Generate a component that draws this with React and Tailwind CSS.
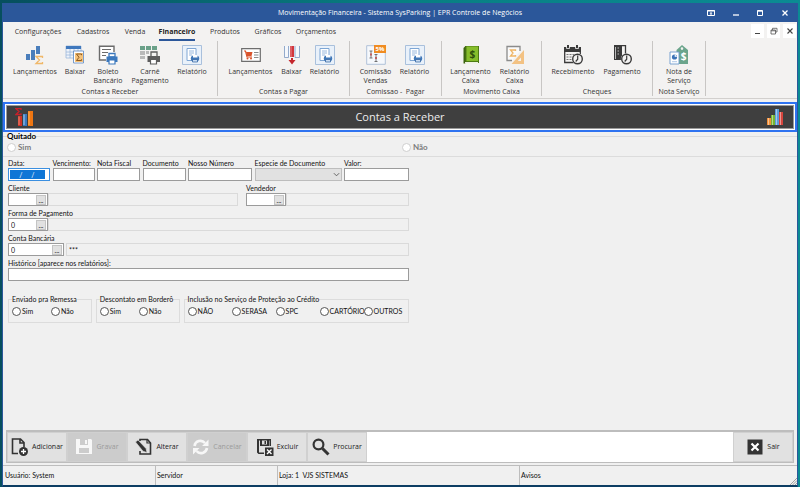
import clsx from "clsx"

const uiFont = "font-['Open_Sans','Noto_Sans',sans-serif]"
const formFont = "font-['Lato','Noto_Sans',sans-serif]"

/* ---------- ribbon icons (20x20) ---------- */

const Svg = ({ children, className = "size-5", box = "0 0 20 20" }) => (
  <svg viewBox={box} className={clsx("shrink-0", className)} fill="none" aria-hidden="true">
    {children}
  </svg>
)

const BarsSigmaIcon = () => (
  <Svg>
    <path fill="#4a7ebb" d="M1 9h4v6H1zM6 5h4v10H6zM11 1h4v8h-4z" />
    <path stroke="#f0b869" strokeWidth="1.3" d="M17.5 13v-1.5H11l3.5 3.5-3.5 3.5h6.5V17" />
  </Svg>
)

const TableSigmaIcon = () => (
  <Svg>
    <path fill="#eef3fa" stroke="#9db8da" strokeWidth=".8" d="M1 1h15v12H1z" />
    <path fill="#3f78bd" d="M1 1h15v3H1z" />
    <path stroke="#9db8da" strokeWidth=".8" d="M1 7h15M1 10h15M5 4v9M9 4v9M13 4v9" />
    <path fill="#fff" stroke="#5b87c0" strokeWidth=".8" d="M8.5 6h10v12h-10z" />
    <path fill="#f6c27a" d="M10 8h8v9h-8z" />
    <path stroke="#8a5a20" d="M16.5 10.2V9h-5l2.5 3.3-2.5 3.2h5v-1.2" />
  </Svg>
)

const DocPrinterIcon = () => (
  <Svg>
    <path fill="#fff" stroke="#6b6b6b" strokeWidth="1.4" d="M8 15H1.5V1.2H16V7" />
    <path stroke="#6b6b6b" strokeWidth="1.2" d="M4 4.5h9M4 7.5h6M4 10.5h4" />
    <path fill="#fff" stroke="#3b78bd" strokeWidth="1.3" d="M11 8.500h6V12h-6z" />
    <path fill="#3b78bd" d="M8.5 11.500h11V17h-11z" />
    <path fill="#fff" stroke="#3b78bd" strokeWidth="1.2" d="M11 15h6v4h-6z" />
  </Svg>
)

const GridPrinterIcon = () => (
  <Svg>
    <path fill="#6aa088" d="M0 1h5v4H0zM6 1h5v4H6zM12 1h5v4h-5z" />
    <path fill="#b9b9b9" d="M0 6h5v4H0zM0 11h5v3H0zM6 6h3v3H6z" />
    <path stroke="#5d5d5d" strokeWidth="1.3" d="M11 11V7h6v4" />
    <path fill="#5d5d5d" d="M7.5 11H20v6H7.500z" />
    <path fill="#fff" stroke="#5d5d5d" strokeWidth="1.2" d="M10.500 14.500h6V19h-6z" />
  </Svg>
)

const ReportIcon = () => (
  <Svg>
    <path fill="#e9f1fa" stroke="#a9c0dc" d="M.5.5h19v19H.5z" />
    <path fill="#fff" stroke="#7ea6d4" d="M5 3.500h9v12H5z" />
    <path stroke="#7ea6d4" strokeWidth=".8" d="M7 6h5M7 8h5M7 10h3" />
    <ellipse cx="13" cy="13.500" rx="4.200" ry="3.300" fill="#4178b8" />
    <path fill="#fff" d="M11 10h4.500v2.500H11z" />
    <path fill="#c9dcf2" stroke="#2d5f9c" strokeWidth=".7" d="M10.500 14.500h5V17h-5z" />
  </Svg>
)

const CartCardIcon = () => (
  <Svg>
    <path fill="#fff" stroke="#6e6e6e" strokeWidth="1.2" d="M.7 3.700h18.600v12.600H.7z" />
    <path stroke="#d9532c" strokeWidth="1.2" d="M3 6h1.500l1.500 6h5" />
    <path fill="#d9532c" d="M5 7h6.500l-1 4H6z" />
    <circle cx="6.500" cy="13.500" r="1" fill="#d9532c" />
    <circle cx="10" cy="13.500" r="1" fill="#d9532c" />
    <path stroke="#8a8a8a" d="M13 7.500h4.500M13 10h4.500M13 12.500h4.500" />
  </Svg>
)

const ColumnDownIcon = () => (
  <Svg>
    <path fill="#f4f7fb" d="M2 1h15v11H2z" />
    <path stroke="#7896c0" strokeWidth=".8" d="M2.500 1v11.500h4V1M13 1v11.500h4.500V1" />
    <path fill="#d2363c" d="M8 1h4v11H8z" />
    <path fill="#e8888b" d="M8.500 1h1v11h-1z" />
    <path fill="#c4272d" d="M9 13h2v2h2.500L10 19.500 6.500 15H9z" />
  </Svg>
)

const CommissionIcon = () => (
  <Svg>
    <path fill="#f5f8fc" stroke="#a9bcd6" strokeWidth=".9" d="M.7.7h18.600v18.600H.7z" />
    <path fill="#f08c22" d="M8 0h12v8H8z" />
    <text x="14" y="6" textAnchor="middle" fontSize="6" fontWeight="700" fill="#fff">
      5%
    </text>
    <path stroke="#555" strokeWidth=".8" d="M3.500 6h3M3.500 13h3M5 6v7M8.500 9.500h3M8.500 16.500h3M10 9.500v7" />
    <path fill="#c2474a" d="M4.200 8.500h1.600v2H4.200zM9.200 12h1.600v2H9.200z" />
  </Svg>
)

const CashBookIcon = () => (
  <Svg>
    <path fill="#4d7a14" d="M4 1h14v17H4z" />
    <path fill="#3c6310" d="M2.500 3l2-2v17.500h-2z" />
    <path fill="#86bd2b" d="M5.500 1.500H17V16H5.500z" />
    <path fill="#eef3e2" d="M4 17h13v1.500H4z" />
    <text x="11.300" y="12.500" textAnchor="middle" fontSize="10" fontWeight="700" fill="#2f4f0c">
      $
    </text>
  </Svg>
)

const SigmaRulerIcon = () => (
  <Svg>
    <path fill="#fafafa" stroke="#8b8b8b" strokeWidth="1.3" d="M7 15.500H2v-14h13V6" />
    <path stroke="#efb566" strokeWidth="1.3" d="M10.500 6V5h-5L8 8l-2.500 3h5v-1" />
    <path fill="#f3c283" fillRule="evenodd" d="M19 5v14H6.500zM16 12.500V16h-3.200z" />
  </Svg>
)

const Clock = () => (
  <>
    <circle cx="14.500" cy="14" r="5.700" fill="#f3f2f1" />
    <circle cx="14.500" cy="14" r="4.800" stroke="#3a3a3a" strokeWidth="1.4" />
    <path stroke="#3a3a3a" strokeWidth="1.2" d="M14.700 10.500v3.700l-2 2.300" />
  </>
)

const CalendarClockIcon = () => (
  <Svg>
    <path fill="#3a3a3a" d="M1 2h17v5H1zM4 0h2v3H4zM13 0h2v3h-2z" />
    <path stroke="#f3f2f1" strokeWidth=".8" d="M3.500 1v2.500h3V1M12.500 1v2.500h3V1" />
    <path stroke="#3a3a3a" strokeWidth="1.3" d="M1.700 6v11.500h9M17.300 6v3" />
    <path stroke="#777" strokeDasharray="2 1" d="M3.500 9.500h9M3.500 12h6M3.500 14.500h6" />
    <Clock />
  </Svg>
)

const ServerClockIcon = () => (
  <Svg>
    <path fill="#3a3a3a" d="M2 0h8v15H2z" />
    <path stroke="#3a3a3a" strokeWidth="1.3" d="M10 .7h3.500V9" />
    <path stroke="#c9c9c9" strokeWidth=".9" d="M3.500 2v12M5.500 3H7M5.500 6H7M5.500 9H7" />
    <Clock />
  </Svg>
)

const ServiceTagIcon = () => (
  <Svg>
    <path
      fill="#6ba58c"
      fillRule="evenodd"
      d="M13 0l6 5v14H7.500V5zM13 2.300a1.300 1.300 0 100 2.600 1.300 1.300 0 000-2.600z"
    />
    <text x="14.500" y="15" textAnchor="middle" fontSize="10" fontWeight="700" fill="#fff">
      $
    </text>
    <path fill="#fff" stroke="#6c98cd" strokeWidth=".9" d="M1 7h9v12H1z" />
    <circle cx="5.500" cy="12" r="2.600" fill="#3c73b8" />
    <path fill="#fff" d="M5.700 9.300v2.500h2.600z" />
    <path stroke="#9bb9df" strokeWidth=".8" d="M3 16.700h5" />
  </Svg>
)

/* ---------- data ---------- */

const tabs = [
  { label: "Configurações", width: "w-[58px]" },
  { label: "Cadastros", width: "w-[52px]" },
  { label: "Venda", width: "w-[32px]" },
  { label: "Financeiro", width: "w-[52px]", active: true },
  { label: "Produtos", width: "w-[44px]" },
  { label: "Gráficos", width: "w-[42px]" },
  { label: "Orçamentos", width: "w-[54px]" },
]

const groups = [
  {
    title: "Contas a Receber",
    width: "w-[215px]",
    items: [
      { label: "Lançamentos", icon: BarsSigmaIcon, width: "w-[50px]" },
      { label: "Baixar", icon: TableSigmaIcon, width: "w-[30px]" },
      { label: "Boleto Bancário", icon: DocPrinterIcon, width: "w-[36px]" },
      { label: "Carnê Pagamento", icon: GridPrinterIcon, width: "w-[48px]" },
      { label: "Relatório", icon: ReportIcon, width: "w-[36px]" },
    ],
  },
  {
    title: "Contas a Pagar",
    width: "w-[132px]",
    items: [
      { label: "Lançamentos", icon: CartCardIcon, width: "w-[46px]" },
      { label: "Baixar", icon: ColumnDownIcon, width: "w-[36px]" },
      { label: "Relatório", icon: ReportIcon, width: "w-[30px]" },
    ],
  },
  {
    title: "Comissao -  Pagar",
    width: "w-[92px]",
    items: [
      { label: "Comissão Vendas", icon: CommissionIcon, width: "w-[38px]" },
      { label: "Relatório", icon: ReportIcon, width: "w-[40px]" },
    ],
  },
  {
    title: "Movimento Caixa",
    width: "w-[100px]",
    items: [
      { label: "Lançamento Caixa", icon: CashBookIcon, width: "w-[46px]" },
      { label: "Relatório Caixa", icon: SigmaRulerIcon, width: "w-[42px]" },
    ],
  },
  {
    title: "Cheques",
    width: "w-[111px]",
    items: [
      { label: "Recebimento", icon: CalendarClockIcon, width: "w-[50px]" },
      { label: "Pagamento", icon: ServerClockIcon, width: "w-[48px]" },
    ],
  },
  {
    title: "Nota Serviço",
    width: "w-[53px]",
    items: [{ label: "Nota de Serviço", icon: ServiceTagIcon, width: "w-[36px]" }],
  },
]

/* ---------- window chrome ---------- */

const TitleBar = () => (
  <header className="grid h-[19px] grid-cols-[1fr_auto_1fr] items-center bg-[#2b579a] text-white">
    <span />
    <h1 className="text-[7px] leading-none">Movimentação Financeira - Sistema SysParking | EPR Controle de Negócios</h1>
    <div className="flex justify-end">
      <button aria-label="Opções da faixa" className="flex w-6 justify-center">
        <Svg className="size-2" box="0 0 8 8">
          <path stroke="#fff" d="M.5 1.500h7v5h-7zM0 2h8" />
          <path fill="#fff" d="M4 3l1.500 1.500h-1V6h-1V4.500h-1z" />
        </Svg>
      </button>
      <button aria-label="Minimizar" className="flex w-[25px] justify-center">
        <Svg className="size-2" box="0 0 8 8">
          <path stroke="#fff" strokeWidth="1.3" d="M1 6h6" />
        </Svg>
      </button>
      <button aria-label="Maximizar" className="flex w-6 justify-center">
        <Svg className="size-2" box="0 0 8 8">
          <path stroke="#fff" d="M1.500 1.500h5v5h-5zM1 2.200h6" />
        </Svg>
      </button>
      <button aria-label="Fechar" className="flex w-[25px] justify-center">
        <Svg className="size-2" box="0 0 8 8">
          <path stroke="#fff" strokeWidth="1.3" d="M1.500 1.500l5 5M6.500 1.500l-5 5" />
        </Svg>
      </button>
    </div>
  </header>
)

const TabStrip = () => (
  <nav className="flex h-[19px] justify-between pl-[6px] text-[7px] text-[#333]">
    <div className="flex items-end">
      {tabs.map((tab) => (
        <button key={tab.label} className={clsx("flex justify-center leading-[11px] whitespace-nowrap", tab.width)}>
          <span
            className={clsx(
              "border-b-2 pb-[2px]",
              tab.active ? "border-[#2b579a] font-bold text-[#222]" : "border-transparent",
            )}
          >
            {tab.label}
          </span>
        </button>
      ))}
    </div>
    <div className="flex gap-[3px] pt-[2px] pr-px">
      <button aria-label="Minimizar documento" className="flex h-[14px] w-[13px] items-center justify-center bg-white">
        <Svg className="size-2" box="0 0 8 8">
          <path stroke="#444" d="M1 6.500h5" />
        </Svg>
      </button>
      <button aria-label="Restaurar documento" className="flex h-[14px] w-[13px] items-center justify-center bg-white">
        <Svg className="size-2" box="0 0 8 8">
          <path stroke="#555" strokeWidth=".8" d="M1 3h4.500v4H1zM2.500 3V1.300H7V5H5.500M1 3.800h4.500" />
        </Svg>
      </button>
      <button aria-label="Fechar documento" className="flex h-[14px] w-[13px] items-center justify-center bg-white">
        <Svg className="size-2" box="0 0 8 8">
          <path stroke="#444" strokeWidth="1.1" d="M1.500 1.500l5 5M6.500 1.500l-5 5" />
        </Svg>
      </button>
    </div>
  </nav>
)

const RibbonGroup = ({ title, width, items }) => (
  <section className={clsx("flex h-[55px] flex-col justify-between border-r border-[#c8c6c4]", width)}>
    <div className="flex justify-center pt-1">
      {items.map(({ label, icon: Icon, width: itemWidth }) => (
        <button key={label} className={clsx("flex flex-col items-center gap-[2px]", itemWidth)}>
          <Icon />
          <span className="leading-[9px]">{label}</span>
        </button>
      ))}
    </div>
    <h2 className="text-center leading-[9px] whitespace-pre">{title}</h2>
  </section>
)

const Ribbon = () => (
  <div className="border-b border-[#d2d0ce] pb-[2px]">
    <div className="flex items-start text-[7px] text-[#333]">
      {groups.map((group) => (
        <RibbonGroup key={group.title} {...group} />
      ))}
    </div>
  </div>
)

const Banner = () => (
  <div className="mt-[3px] border-2 border-[#2f73f0] bg-white p-px">
    <div className="grid h-[24px] grid-cols-[1fr_auto_1fr] items-center border border-[#9a9a9a] bg-[#3f3f3f] px-2">
      <Svg>
        <path stroke="#c8202a" strokeWidth="1.3" d="M6 3V1.700H1L4 4.500 1 7.500h5V6.200" />
        <path fill="#cf3326" d="M3 9h4v10H3z" />
        <path fill="#f08a75" d="M3.500 9.500h1V18h-1z" />
        <path fill="#3878bd" d="M8 7h4v12H8z" />
        <path fill="#a9cdee" d="M8.500 7.500h1V18h-1z" />
        <path fill="#ee7612" d="M13 4h5v15h-5z" />
        <path fill="#fbb35e" d="M13.500 4.500h1V18h-1z" />
      </Svg>
      <h2 className="text-[11px] text-[#ededed]">Contas a Receber</h2>
      <Svg className="size-5 justify-self-end">
        <path fill="#f2903a" d="M2 11h4v7H2z" />
        <path fill="#79b52e" d="M6 8h4v10H6z" />
        <path fill="#5c9bd8" d="M10 2h4v16h-4z" />
        <path fill="#d6453d" d="M14 5h4v13h-4z" />
        <path fill="#fff" fillOpacity=".45" d="M3 11h1v7H3zM7 8h1v10H7zM11 2h1v16h-1zM15 5h1v13h-1z" />
      </Svg>
    </div>
  </div>
)

/* ---------- form ---------- */

const box = "h-[13px] min-w-0 border border-[#9b9b9b] bg-white px-[2px] leading-none outline-none"
const readOnlyBox = "h-[13px] min-w-0 flex-1 border border-[#dadada] bg-[#f0f0f0] px-[2px] leading-none outline-none"

const Field = ({ id, label, width, children }) => (
  <div className={clsx("flex flex-col", width)}>
    <label htmlFor={id} className="leading-[10px] whitespace-nowrap">
      {label}
    </label>
    {children ?? <input id={id} type="text" className={box} />}
  </div>
)

const Lookup = ({ id, label, width, inputWidth, value = "", description = "", gap }) => (
  <Field id={id} label={label} width={width}>
    <div className={clsx("flex", gap)}>
      <div className={clsx("flex h-[13px] items-center border border-[#9b9b9b] bg-white pr-px", inputWidth)}>
        <input id={id} type="text" defaultValue={value} className="w-0 flex-1 px-[2px] leading-none outline-none" />
        <button
          type="button"
          aria-label={`Buscar ${label}`}
          className="flex h-[10px] w-[10px] items-end justify-center border border-[#c4c4c4] bg-[#e1e1e1] leading-[8px]"
        >
          ...
        </button>
      </div>
      <input type="text" readOnly aria-label={`${label} descrição`} defaultValue={description} className={readOnlyBox} />
    </div>
  </Field>
)

const Radio = ({ name, label, width, disabled, gap = "gap-px" }) => (
  <label className={clsx("flex items-center whitespace-nowrap", gap, width)}>
    <input
      type="radio"
      name={name}
      disabled={disabled}
      className={clsx(
        "size-[9px] shrink-0 appearance-none rounded-full border bg-white checked:border-[3px]",
        disabled ? "border-[#cfcfcf]" : "border-[#555]",
      )}
    />
    {label}
  </label>
)

const RadioGroup = ({ title, name, width, options }) => (
  <fieldset className={clsx("h-[28px] border border-[#dcdcdc] px-[3px]", width)}>
    <legend className="leading-[9px] whitespace-nowrap">{title}</legend>
    <div className="flex pt-[2px]">
      {options.map((option) => (
        <Radio key={option.label} name={name} {...option} />
      ))}
    </div>
  </fieldset>
)

const ReceivableForm = () => (
  <form className={clsx("flex flex-1 flex-col bg-[#f0f0f0] text-[7px] text-[#111]", formFont)}>
    <fieldset className="border-y border-[#dcdcdc] pl-[4px] text-[8px]">
      <legend className="leading-[9px] font-bold text-black">Quitado</legend>
      <div className="grid grid-cols-2 pb-[3px] leading-[12px] font-bold text-[#7b7b7b]">
        <Radio name="quitado" label="Sim" gap="gap-[2px]" disabled />
        <Radio name="quitado" label="Não" gap="gap-[2px]" disabled />
      </div>
    </fieldset>

    <div className="flex w-[406px] flex-col gap-[2px] pt-px pl-[5px]">
      <div className="flex justify-between">
        <Field id="data" label="Data:" width="w-[42px]">
          <div className="flex h-[13px] items-center border border-[#3b8fe0] bg-white px-px">
            <input
              id="data"
              type="text"
              defaultValue="    /     /"
              className="h-[9px] w-[35px] bg-[#0f76d6] px-[2px] leading-none text-white outline-none"
            />
          </div>
        </Field>
        <Field id="vencimento" label="Vencimento:" width="w-[42px]" />
        <Field id="nota" label="Nota Fiscal" width="w-[43px]" />
        <Field id="documento" label="Documento" width="w-[43px]" />
        <Field id="nosso-numero" label="Nosso Número" width="w-[64px]" />
        <Field id="especie" label="Especie de Documento" width="w-[87px]">
          <div className="grid">
            <select
              id="especie"
              className="col-start-1 row-start-1 h-[13px] appearance-none border border-[#bdbdbd] bg-[#e1e1e1]"
            >
              <option></option>
            </select>
            <Svg
              className="pointer-events-none col-start-1 row-start-1 mr-[2px] size-[7px] self-center justify-self-end"
              box="0 0 8 8"
            >
              <path stroke="#555" d="M1 2.500l3 3 3-3" />
            </Svg>
          </div>
        </Field>
        <Field id="valor" label="Valor:" width="w-[65px]" />
      </div>

      <div className="flex justify-between">
        <Lookup id="cliente" label="Cliente" width="w-[230px]" inputWidth="w-[40px]" />
        <Lookup id="vendedor" label="Vendedor" width="w-[163px]" inputWidth="w-[40px]" />
      </div>
      <Lookup id="forma" label="Forma de Pagamento" inputWidth="w-[40px]" value="0" />
      <Lookup id="conta" label="Conta Bancária" inputWidth="w-[56px]" value="0" description="***" gap="gap-[2px]" />
      <Field id="historico" label="Histórico [aparece nos relatórios]:" />

      <div className="mt-3 flex gap-[4px]">
        <RadioGroup
          title="Enviado pra Remessa"
          name="remessa"
          width="w-[84px]"
          options={[{ label: "Sim", width: "w-[39px]" }, { label: "Não" }]}
        />
        <RadioGroup
          title="Descontato em Borderô"
          name="bordero"
          width="w-[84px]"
          options={[{ label: "Sim", width: "w-[39px]" }, { label: "Não" }]}
        />
        <RadioGroup
          title="Inclusão no Serviço de Proteção ao Crédito"
          name="protecao"
          width="w-[226px]"
          options={[
            { label: "NÃO", width: "w-[44px]" },
            { label: "SERASA", width: "w-[44px]" },
            { label: "SPC", width: "w-[44px]" },
            { label: "CARTÓRIO", width: "w-[44px]" },
            { label: "OUTROS" },
          ]}
        />
      </div>
    </div>
  </form>
)

/* ---------- bottom toolbar ---------- */

const AddIcon = () => (
  <>
    <path stroke="#333" strokeWidth="1.6" d="M7 15.500H1.500V1h8L13 4.500V9M9 1v4h4" />
    <circle cx="12.500" cy="13.500" r="4.500" fill="#333" />
    <path stroke="#fff" strokeWidth="1.3" d="M12.500 11v5M10 13.500h5" />
  </>
)

const SaveIcon = () => (
  <path fill="#f7f7f7" fillRule="evenodd" d="M1 1h15l1 1v14H1zM5 1v6h8V1zM10 2h2v4h-2zM4 10v5h10v-5z" />
)

const EditIcon = () => (
  <>
    <path stroke="#333" strokeWidth="1.6" d="M5 3V1.500h7.500L15.500 5v11H5v-3" />
    <path stroke="#333" strokeWidth="1.2" d="M12 1.500V5h3.500" />
    <path fill="#333" stroke="#e1e1e1" strokeWidth=".6" d="M.5 4L3 2l8 8.500 1 4-4-1.300z" />
  </>
)

const RefreshIcon = () => (
  <>
    <path stroke="#f7f7f7" strokeWidth="2.6" d="M2.500 8A6 6 0 0113 5M15 10a6 6 0 01-10.500 3" />
    <path fill="#f7f7f7" d="M16.500 1.500V8H10zM1 16.500V10h6.500z" />
  </>
)

const DeleteIcon = () => (
  <>
    <path
      fill="#333"
      fillRule="evenodd"
      d="M1 1h14v7h-1.500V2.500H13V8H4V2.500H3v12h5V16H2.500L1 14.500zM6 2.500v4h5v-4zM8.500 3H10v3H8.500z"
    />
    <path fill="#333" d="M9 9.500h8.500V18H9z" />
    <path stroke="#fff" strokeWidth="1.4" d="M11 11.500l4.500 4.500M15.500 11.500L11 16" />
  </>
)

const SearchIcon = () => (
  <>
    <circle cx="6.500" cy="6.500" r="4.900" stroke="#333" strokeWidth="2.2" />
    <path stroke="#333" strokeWidth="3" d="M10.500 10.500l6 6" />
  </>
)

const ExitIcon = () => (
  <>
    <path fill="#333" d="M1.500 1.500h15v15h-15z" />
    <path stroke="#fff" strokeWidth="2.2" d="M5.500 5.500l7 7M12.500 5.500l-7 7" />
  </>
)

const ToolButton = ({ label, icon: Icon, disabled }) => (
  <button
    type="button"
    disabled={disabled}
    className={clsx(
      "flex h-[30px] w-[60px] shrink-0 items-center justify-center gap-[3px] border border-[#d0d0d0]",
      disabled ? "bg-[#cccccc] text-[#9b9b9b]" : "bg-[#e1e1e1] text-[#222]",
    )}
  >
    <Svg className="size-[18px]" box="0 0 18 18">
      <Icon />
    </Svg>
    {label}
  </button>
)

const Toolbar = () => (
  <div className="bg-[#f0f0f0] px-[3px] pb-[2px]">
    <div className="flex border border-t-2 border-[#bdbdbd] bg-white text-[7px]">
      <ToolButton label="Adicionar" icon={AddIcon} />
      <ToolButton label="Gravar" icon={SaveIcon} disabled />
      <ToolButton label="Alterar" icon={EditIcon} />
      <ToolButton label="Cancelar" icon={RefreshIcon} disabled />
      <ToolButton label="Excluir" icon={DeleteIcon} />
      <ToolButton label="Procurar" icon={SearchIcon} />
      <div className="flex-1" />
      <ToolButton label="Sair" icon={ExitIcon} />
    </div>
  </div>
)

const StatusBar = () => (
  <footer
    className={clsx(
      "grid h-[20px] grid-cols-[152px_122px_242px_1fr_auto] items-center border-t border-[#bdbdbd] bg-[#f0f0f0] text-[7px] whitespace-pre text-[#111]",
      formFont,
    )}
  >
    <span className="pl-[2px]">Usuário: System</span>
    <span className="flex h-full items-center border-l border-[#bdbdbd] pl-px">Servidor</span>
    <span className="flex h-full items-center border-l border-[#bdbdbd] pl-px">Loja: 1  VJS SISTEMAS</span>
    <span className="flex h-full items-center border-l border-[#bdbdbd] pl-px">Avisos</span>
    <Svg className="size-[8px] self-end" box="0 0 8 8">
      <path stroke="#999" strokeWidth=".9" d="M1 8l7-7M3.500 8L8 3.500M6 8l2-2" />
    </Svg>
  </footer>
)

export default function App() {
  return (
    <div
      className={clsx(
        "flex min-h-screen flex-col bg-linear-to-r from-[#064f5e] via-[#087f82] to-[#0b8b93] px-[2px] pt-[3px]",
        uiFont,
      )}
    >
      <main className="flex flex-1 flex-col border-x border-b-2 border-[#2b579a] border-b-[#0d3d63] bg-[#f3f2f1]">
        <TitleBar />
        <TabStrip />
        <Ribbon />
        <Banner />
        <ReceivableForm />
        <Toolbar />
        <StatusBar />
      </main>
    </div>
  )
}
